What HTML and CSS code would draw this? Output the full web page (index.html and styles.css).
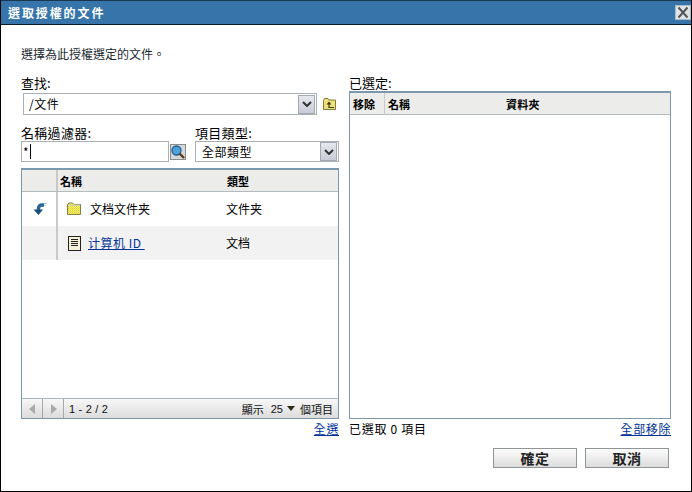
FILE: index.html
```html
<!DOCTYPE html>
<html lang="zh-Hant">
<head>
<meta charset="utf-8">
<title>選取授權的文件</title>
<link rel="stylesheet" href="styles.css">
</head>
<body>
<div class="dialog">
  <div class="titlebar">
    <span class="title">選取授權的文件</span>
    <span class="close"><svg width="14" height="13" viewBox="0 0 14 13"><path d="M2.500 1.500l9 10M11.500 1.500l-9 10" stroke="#555" stroke-width="2" fill="none"/></svg></span>
  </div>
  <div class="content">
    <p class="intro">選擇為此授權選定的文件。</p>
    <div class="columns">
      <div class="left">
        <div class="label find-label">查找:</div>
        <div class="find-row">
          <div class="select find-select"><span class="select-text">/文件</span>
            <span class="arrow"><svg width="10" height="6" viewBox="0 0 10 6"><path d="M1 1l4 4 4-4" stroke="#333" stroke-width="2" fill="none"/></svg></span>
          </div>
          <svg class="up-icon" width="15" height="14" viewBox="0 0 15 14"><path d="M1.500 12.500V3.500L2.500 1.500H6L7 3H13.500V12.500Z" fill="#eee07a" stroke="#7d7a3a"/><path d="M7 4.500L4.500 7.500H9.500Z" fill="#3c3a10"/><path d="M7 7V10.500H12" stroke="#3c3a10" fill="none" stroke-width="1.200"/></svg>
        </div>
        <div class="filter-row">
          <div class="filter-name">
            <div class="label">名稱過濾器:</div>
            <div class="filter-input-row">
              <div class="input">*<span class="caret"></span></div>
              <span class="search"><svg width="14" height="14" viewBox="0 0 14 14"><circle cx="5.500" cy="5.500" r="4.500" fill="#4f9fd8" stroke="#1d5f8f" stroke-width="1.300"/><path d="M8.500 8.500L13 13" stroke="#5a3a1a" stroke-width="2.400"/></svg></span>
            </div>
          </div>
          <div class="filter-type">
            <div class="label">項目類型:</div>
            <div class="select type-select"><span class="select-text">全部類型</span>
              <span class="arrow"><svg width="10" height="6" viewBox="0 0 10 6"><path d="M1 1l4 4 4-4" stroke="#333" stroke-width="2" fill="none"/></svg></span>
            </div>
          </div>
        </div>
        <div class="panel browse">
          <div class="head browse-grid">
            <span class="cell-back"></span><span class="cell-name">名稱</span><span>類型</span>
          </div>
          <div class="browse-grid row">
            <span class="cell-back"><svg class="back-icon" width="14" height="12" viewBox="0 0 14 12"><path d="M5.500 9V5.500Q5.500 2 9 2H11" stroke="#2a6595" stroke-width="3.400" fill="none"/><path d="M0.500 6.500H10L5.500 12Z" fill="#174f7d"/><path d="M11.500 0.500h2M11.500 2.500h1" stroke="#8fb4cc"/></svg></span>
            <span class="cell-name"><svg class="row-icon" width="16" height="14" viewBox="0 0 16 14"><defs><pattern id="dither" width="2" height="2" patternUnits="userSpaceOnUse"><rect width="2" height="2" fill="#faf25a"/><rect width="1" height="1" fill="#d2cc48"/><rect x="1" y="1" width="1" height="1" fill="#e8e04c"/></pattern></defs><path d="M1.500 12.500V2.500L3 1H6.500L8 2.500H14.500V12.500Z" fill="url(#dither)" stroke="#7f7d48"/><path d="M2 2.500H14V4H2Z" fill="#d9d8a4"/></svg><span>文档文件夹</span></span>
            <span>文件夹</span>
          </div>
          <div class="browse-grid row alt">
            <span class="cell-back"></span>
            <span class="cell-name"><svg class="row-icon" width="16" height="15" viewBox="0 0 16 15"><rect x="2.500" y="0.500" width="12" height="14" fill="#f4f2d8" stroke="#222"/><path d="M5 3.500h7M5 5.500h7M5 7.500h7M5 9.500h7" stroke="#222"/></svg><a href="#" class="link">计算机 ID&nbsp;</a></span>
            <span>文档</span>
          </div>
          <div class="spacer"></div>
          <div class="pager">
            <span class="page-btn"><svg width="7" height="10" viewBox="0 0 7 10"><path d="M6 0V10L0 5Z" fill="#aaa"/></svg></span>
            <span class="page-btn"><svg width="7" height="10" viewBox="0 0 7 10"><path d="M1 0V10L7 5Z" fill="#aaa"/></svg></span>
            <span class="range">1 - 2 / 2</span>
            <span class="per-page">顯示</span>
            <span class="per-count">25</span>
            <svg class="per-arrow" width="8" height="5" viewBox="0 0 8 5"><path d="M0 0H8L4 5Z" fill="#2e2e14"/></svg>
            <span>個項目</span>
          </div>
        </div>
        <div class="under under-left"><a href="#" class="link">全選</a></div>
      </div>
      <div class="right">
        <div class="label find-label">已選定:</div>
        <div class="panel selected">
          <div class="head selected-grid">
            <span class="cell-remove">移除</span><span class="sel-name">名稱</span><span class="sel-folder">資料夾</span>
          </div>
        </div>
        <div class="under under-right"><span class="count">已選取 0 項目</span><a href="#" class="link">全部移除</a></div>
      </div>
    </div>
    <div class="buttons">
      <button class="btn" type="button">確定</button>
      <button class="btn" type="button">取消</button>
    </div>
  </div>
</div>
</body>
</html>
```
FILE: styles.css
```css
* { box-sizing: border-box; }
html, body { margin: 0; padding: 0; }
body {
  width: 692px;
  height: 492px;
  overflow: hidden;
  background: #fff;
  color: #000;
  font: 12px/16px "Noto Sans CJK TC", "Liberation Sans", sans-serif;
}
.dialog {
  width: 692px;
  height: 492px;
  display: flex;
  flex-direction: column;
  border: 1px solid #000;
  border-top-color: #17384f;
}
.titlebar {
  flex: none;
  height: 24px;
  background: #3674aa;
  border-bottom: 1px solid #071b2b;
  display: flex;
  align-items: center;
  justify-content: space-between;
  padding: 0 0 0 7px;
}
.title {
  color: #fff;
  font-weight: 700;
  letter-spacing: 1.900px;
}
.close {
  width: 16px;
  height: 15px;
  background: #dfe3e6;
  border: 1px solid #a9bccb;
  display: flex;
  align-items: center;
  justify-content: center;
}
.content {
  flex: 1;
  display: flex;
  flex-direction: column;
  padding: 0 20px;
}
.intro {
  margin: 21px 0 0;
  height: 16px;
  color: #1c2a30;
}
.columns {
  display: grid;
  grid-template-columns: 318px 322px;
  column-gap: 10px;
  margin-top: 13px;
}
.left, .right { display: flex; flex-direction: column; }
.label { height: 16px; }
.find-label { font-size: 13px; }
.find-row {
  display: flex;
  align-items: center;
  margin: 2px 0 0 2px;
  gap: 5px;
}
.select {
  display: flex;
  align-items: center;
  justify-content: space-between;
  background: #fff;
  border: 1px solid #aab0b4;
}
.find-select { width: 294px; height: 22px; padding: 0 1px 0 5px; }
.select-text { letter-spacing: 0.500px; }
.arrow {
  width: 17px;
  height: 19px;
  background: linear-gradient(#e6e8ee, #c9cbd8);
  border: 1px solid #a7a9b0;
  display: flex;
  align-items: center;
  justify-content: center;
}
.up-icon { flex: none; }
.filter-row {
  display: flex;
  justify-content: space-between;
  margin-top: 10px;
}
.filter-name { width: 166px; }
.filter-name .label, .filter-type .label { font-size: 13px; letter-spacing: 0.300px; }
.filter-input-row { display: flex; align-items: center; gap: 1px; }
.input {
  width: 148px;
  height: 21px;
  border: 1px solid #aab0b4;
  padding-left: 1px;
  line-height: 19px;
  display: flex;
  align-items: center;
}
.caret { width: 1px; height: 15px; margin-left: 1px; background: #000; }
.search {
  width: 16px;
  height: 16px;
  background: #d5d8da;
  border: 1px solid #8b8d8d;
  display: flex;
  align-items: center;
  justify-content: center;
}
.filter-type { width: 144px; }
.type-select { height: 21px; padding: 0 1px 0 6px; }
.panel {
  display: flex;
  flex-direction: column;
  border: 1px solid #7d98ac;
  border-top-width: 2px;
  background: #fff;
}
.browse { height: 251px; margin-top: 6px; }
.head {
  height: 22px;
  background: #ececea;
  border-bottom: 1px solid #b4bcc0;
  font-size: 11px;
  font-weight: 700;
  align-items: center;
}
.browse-grid {
  display: grid;
  grid-template-columns: 34px 170px 1fr;
  align-items: center;
}
.browse-grid .cell-name {
  border-left: 2px solid #c9c9c9;
  align-self: stretch;
  display: flex;
  align-items: center;
}
.head.browse-grid .cell-name { padding-left: 2px; }
.head.browse-grid > span:last-child { padding-left: 1px; }
.cell-back { display: flex; justify-content: center; }
.back-icon { margin-left: 1px; }
.row { height: 34px; }
.row .cell-name { padding-left: 8px; gap: 8px; }
.row .cell-name .row-icon + .link { margin-left: -2px; letter-spacing: 0.500px; }
.alt { background: #f2f2f2; }
.row-icon { flex: none; }
.link { color: #00339a; text-decoration: underline; }
.spacer { flex: 1; }
.pager {
  height: 20px;
  display: flex;
  align-items: center;
  border-top: 1px solid #aab6bd;
  background: linear-gradient(#f7f7f7, #dcdcdc);
  font-size: 11px;
  color: #111;
  padding-right: 5px;
}
.page-btn {
  width: 21px;
  height: 19px;
  border-right: 1px solid #a8a8a8;
  display: flex;
  align-items: center;
  justify-content: center;
}
.range { margin-left: 5px; flex: 1; font-family: "Liberation Sans", sans-serif; letter-spacing: 0.200px; }
.per-count { margin-left: 7px; font-family: "Liberation Sans", sans-serif; }
.per-arrow { margin: 0 5px 0 4px; }
.under {
  display: flex;
  height: 20px;
  align-items: center;
}
.under-left { justify-content: flex-end; }
.under-right { justify-content: space-between; }
.count { letter-spacing: 0.700px; }
.under .link { letter-spacing: 0.600px; }
.selected { height: 328px; }
.selected-grid {
  display: grid;
  grid-template-columns: 35px 119px 1fr;
}
.cell-remove { padding-left: 3px; border-right: 1px solid #c9c9c9; height: 100%; line-height: 22px; }
.sel-name { padding-left: 3px; }
.sel-folder { padding-left: 2px; letter-spacing: 0.300px; }
.buttons {
  display: flex;
  justify-content: flex-end;
  gap: 8px;
  margin-top: 9px;
  padding-right: 2px;
}
.btn {
  width: 84px;
  height: 20px;
  padding: 0;
  border: 1px solid #8f9496;
  background: linear-gradient(#fdfdfd, #dcdcdc);
  color: #222;
  font: 700 14px/18px "Noto Sans CJK TC", sans-serif;
  letter-spacing: 0.500px;
}
```
